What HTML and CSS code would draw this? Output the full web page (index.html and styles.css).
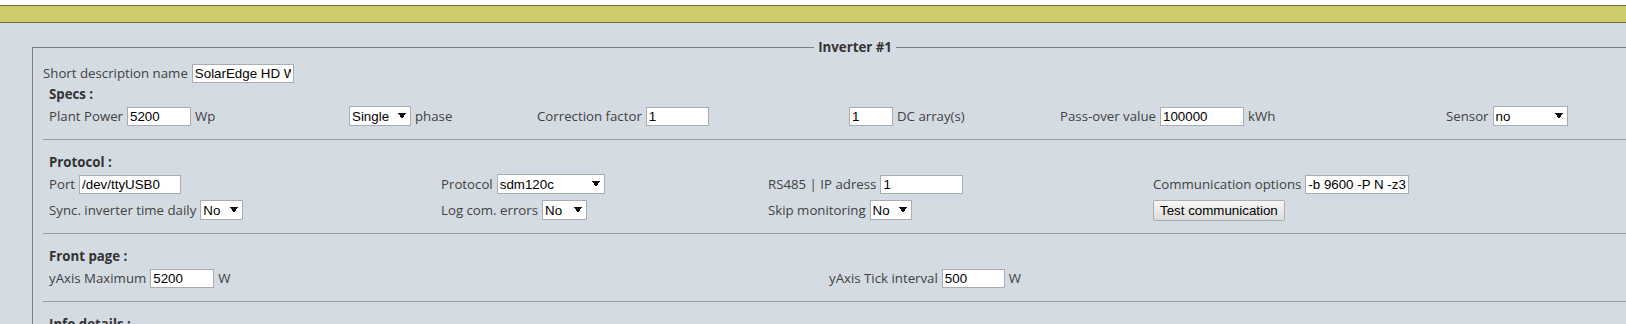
FILE: index.html
```html
<!DOCTYPE html>
<html>
<head>
<title>Inverter configuration</title>
<link rel="stylesheet" href="styles.css">
</head>
<body>
  <div id="top"><div class="bar"></div></div>
  <div id="wrapper">
  <fieldset class="inverter">
    <legend>Inverter #1</legend>
    <div class="line">Short description name <input type="text" class="w102" value="SolarEdge HD Wave"></div>

    <div class="section first">
      <h4>Specs :</h4>
      <div class="grid specs">
        <div class="cell">Plant Power <input type="text" class="w64" value="5200"> Wp</div>
        <div class="cell"><select class="w62"><option>Single</option></select> phase</div>
        <div class="cell">Correction factor <input type="text" class="w63" value="1"></div>
        <div class="cell"><input type="text" class="w44" value="1"> DC array(s)</div>
        <div class="cell">Pass-over value <input type="text" class="w84" value="100000"> kWh</div>
        <div class="cell">Sensor <select class="w75"><option>no</option></select></div>
      </div>
    </div>

    <div class="section">
      <h4>Protocol :</h4>
      <div class="grid protocol">
        <div class="cell">Port <input type="text" class="w102" value="/dev/ttyUSB0"></div>
        <div class="cell">Protocol <select class="w108"><option>sdm120c</option></select></div>
        <div class="cell">RS485 | IP adress <input type="text" class="w83" value="1"></div>
        <div class="cell">Communication options <input type="text" class="w104" value="-b 9600 -P N -z3"></div>
        <div class="cell">Sync. inverter time daily <select class="w43"><option>No</option></select></div>
        <div class="cell">Log com. errors <select class="w45"><option>No</option></select></div>
        <div class="cell">Skip monitoring <select class="w42"><option>No</option></select></div>
        <div class="cell"><button type="button">Test communication</button></div>
      </div>
    </div>

    <div class="section">
      <h4>Front page :</h4>
      <div class="grid front">
        <div class="cell">yAxis Maximum <input type="text" class="w64" value="5200"> W</div>
        <div class="cell">yAxis Tick interval <input type="text" class="w63" value="500"> W</div>
      </div>
    </div>

    <div class="section">
      <h4>Info details :</h4>
      <div class="grid front">
        <div class="cell">Comment <input type="text" class="w102" value=""></div>
      </div>
    </div>
  </fieldset>
  </div>
</body>
</html>
```

FILE: styles.css
```css
html {
  overflow: hidden;
  background: #d4dbe3;
}

body {
  margin: 0;
  font-family: "Open Sans", sans-serif;
  font-size: 13.25px;
  color: #424242;
}

#top {
  background: #fff;
  padding-top: 5px;
}

.bar {
  height: 16px;
  background: #cdcb6a;
  border-top: 1px solid #6f6d45;
  border-bottom: 1px solid #6f6d45;
}

#wrapper {
  padding: 15px 0 0 32px;
}

.inverter {
  box-sizing: border-box;
  width: 1636px;
  margin: 0;
  padding: 6px 0 0 10px;
  border: 1px solid #7d7f82;
}

.inverter legend {
  margin: 0 auto;
  padding: 0 4px;
  line-height: 18px;
  font-weight: bold;
  color: #333;
}

.line {
  display: flex;
  align-items: center;
  gap: 4px;
  height: 22px;
}

.section {
  border-top: 1px solid #9a9ea4;
  padding: 13px 0 12px 6px;
}

.section.first {
  border-top: 0;
  padding-top: 1px;
}

h4 {
  margin: 0 0 2px;
  line-height: 18px;
  font-size: 13.25px;
  font-weight: bold;
  color: #333;
}

.grid {
  display: grid;
  row-gap: 4px;
}

.specs { grid-template-columns: 300px 188px 312px 211px 386px auto; }
.protocol { grid-template-columns: 392px 327px 385px auto; }
.front { grid-template-columns: 780px auto; }

.cell {
  display: flex;
  align-items: center;
  gap: 4px;
  height: 22px;
  white-space: nowrap;
}

input, select, button {
  box-sizing: border-box;
  margin: 0;
  font-family: "Liberation Sans", Arial, sans-serif;
  font-size: 13.33px;
  color: #000;
}

input {
  height: 19px;
  padding: 0 2px;
  background: #fff;
  border: 1px solid #a9acb0;
}

select {
  -webkit-appearance: none;
  appearance: none;
  height: 20px;
  padding: 0 14px 0 2px;
  border: 1px solid #a9acb0;
  border-radius: 0;
  background-color: #fff;
  background-image: linear-gradient(to bottom left, #111 50%, transparent 50%),
                    linear-gradient(to bottom right, #111 50%, transparent 50%);
  background-size: 4px 6px, 4px 6px;
  background-position: right 8px center, right 4px center;
  background-repeat: no-repeat;
}

button {
  height: 21px;
  padding: 0 6px;
  border: 1px solid #adadad;
  border-radius: 2px;
  background: linear-gradient(#f7f7f7, #dcdcdc);
}

.w42 { width: 42px; }
.w43 { width: 43px; }
.w44 { width: 44px; }
.w45 { width: 45px; }
.w62 { width: 62px; }
.w63 { width: 63px; }
.w64 { width: 64px; }
.w75 { width: 75px; }
.w83 { width: 83px; }
.w84 { width: 84px; }
.w102 { width: 102px; }
.w104 { width: 104px; }
.w108 { width: 108px; }
```
